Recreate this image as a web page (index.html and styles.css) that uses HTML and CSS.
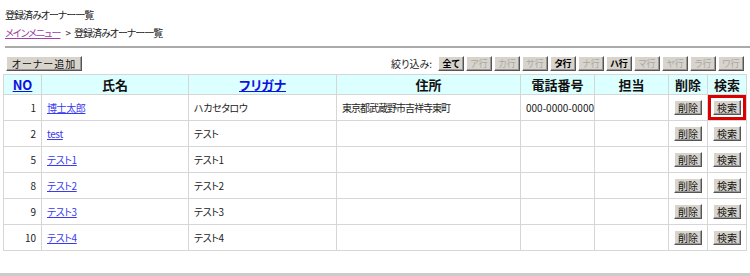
FILE: index.html
```html
<!DOCTYPE html>
<html lang="ja">
<head>
<meta charset="utf-8">
<title>登録済みオーナー一覧</title>
<link rel="stylesheet" href="styles.css">
</head>
<body>
<div class="page">
  <div class="title">登録済みオーナー一覧</div>
  <div class="crumb"><a href="#" class="crumb-link">メインメニュー</a><span class="sep">&gt;</span>登録済みオーナー一覧</div>
  <div class="rule"></div>
  <div class="toolbar">
    <button class="btn btn-add">オーナー追加</button>
    <div class="filter">
      <span class="filter-label">絞り込み:</span>
      <button class="btn fbtn on">全て</button>
      <button class="btn fbtn off">ア行</button>
      <button class="btn fbtn off">カ行</button>
      <button class="btn fbtn off">サ行</button>
      <button class="btn fbtn on">タ行</button>
      <button class="btn fbtn off">ナ行</button>
      <button class="btn fbtn on">ハ行</button>
      <button class="btn fbtn off">マ行</button>
      <button class="btn fbtn off">ヤ行</button>
      <button class="btn fbtn off">ラ行</button>
      <button class="btn fbtn off">ワ行</button>
    </div>
  </div>
  <table class="list">
    <colgroup>
      <col class="c-no"><col class="c-name"><col class="c-kana"><col class="c-addr"><col class="c-tel"><col class="c-staff"><col class="c-del"><col class="c-search">
    </colgroup>
    <thead>
      <tr>
        <th><a href="#" class="hlink">NO</a></th>
        <th>氏名</th>
        <th><a href="#" class="hlink">フリガナ</a></th>
        <th>住所</th>
        <th>電話番号</th>
        <th>担当</th>
        <th>削除</th>
        <th>検索</th>
      </tr>
    </thead>
    <tbody>
      <tr>
        <td class="num">1</td>
        <td><a href="#" class="link">博士太郎</a></td>
        <td>ハカセタロウ</td>
        <td class="addr">東京都武蔵野市吉祥寺東町</td>
        <td class="tel">000-0000-0000</td>
        <td></td>
        <td class="ctr"><button class="btn rbtn">削除</button></td>
        <td class="ctr"><button class="btn rbtn hl">検索</button></td>
      </tr>
      <tr>
        <td class="num">2</td>
        <td><a href="#" class="link">test</a></td>
        <td>テスト</td>
        <td></td><td></td><td></td>
        <td class="ctr"><button class="btn rbtn">削除</button></td>
        <td class="ctr"><button class="btn rbtn">検索</button></td>
      </tr>
      <tr>
        <td class="num">5</td>
        <td><a href="#" class="link">テスト1</a></td>
        <td>テスト1</td>
        <td></td><td></td><td></td>
        <td class="ctr"><button class="btn rbtn">削除</button></td>
        <td class="ctr"><button class="btn rbtn">検索</button></td>
      </tr>
      <tr>
        <td class="num">8</td>
        <td><a href="#" class="link">テスト2</a></td>
        <td>テスト2</td>
        <td></td><td></td><td></td>
        <td class="ctr"><button class="btn rbtn">削除</button></td>
        <td class="ctr"><button class="btn rbtn">検索</button></td>
      </tr>
      <tr>
        <td class="num">9</td>
        <td><a href="#" class="link">テスト3</a></td>
        <td>テスト3</td>
        <td></td><td></td><td></td>
        <td class="ctr"><button class="btn rbtn">削除</button></td>
        <td class="ctr"><button class="btn rbtn">検索</button></td>
      </tr>
      <tr>
        <td class="num">10</td>
        <td><a href="#" class="link">テスト4</a></td>
        <td>テスト4</td>
        <td></td><td></td><td></td>
        <td class="ctr"><button class="btn rbtn">削除</button></td>
        <td class="ctr"><button class="btn rbtn">検索</button></td>
      </tr>
    </tbody>
  </table>
  <div class="footer-bar"></div>
</div>
</body>
</html>
```
FILE: styles.css
```css
* { box-sizing: border-box; }
html, body { margin: 0; padding: 0; background: #fff; }
body {
  font-family: "Noto Sans CJK JP", "DejaVu Sans", sans-serif;
  font-feature-settings: "palt";
  font-size: 11px;
  color: #222;
  width: 750px;
  height: 276px;
  overflow: hidden;
}
.page { display: flex; flex-direction: column; }
.title {
  margin: 8px 0 0 5px;
  height: 14px;
  line-height: 14px;
  font-size: 10px;
  letter-spacing: -1px;
}
.crumb {
  margin: 4px 0 0 5px;
  height: 14px;
  line-height: 14px;
  font-size: 10px;
  letter-spacing: -1px;
}
.crumb .sep { margin: 0 4px 0 5px; }
.crumb-link { color: #a040a8; text-decoration: underline; }
.rule {
  margin: 6px 0 0 5px;
  height: 2px;
  background: #aaaaaa;
}
.toolbar {
  margin: 8px 0 0 6px;
  height: 15px;
  display: flex;
  justify-content: space-between;
  align-items: center;
  padding-right: 6px;
}
.btn {
  font-family: "Noto Sans CJK JP", "DejaVu Sans", sans-serif;
  font-feature-settings: "palt";
  font-size: 10px;
  line-height: 11px;
  height: 15px;
  padding: 0 4px;
  background: #d8d4cc;
  color: #111;
  border: 1px solid;
  border-color: #ffffff #555555 #555555 #ffffff;
  box-shadow: inset -1px -1px 0 #999;
  border-radius: 0;
  margin: 0;
  cursor: pointer;
}
.btn-add { width: 76px; padding: 0; letter-spacing: 1px; }
.filter { display: flex; align-items: center; gap: 2px; }
.filter-label { font-size: 10px; margin-right: 4px; }
.fbtn { width: 26px; padding: 0; font-size: 9px; }
.fbtn.on { font-weight: bold; color: #000; }
.fbtn.off { color: #a8a8a8; }
.list {
  margin: 3px 0 0 3px;
  width: 743px;
  border-collapse: collapse;
  table-layout: fixed;
}
.c-no { width: 38px; }
.c-name { width: 147px; }
.c-kana { width: 148px; }
.c-addr { width: 184px; }
.c-tel { width: 74px; }
.c-staff { width: 74px; }
.c-del { width: 39px; }
.c-search { width: 39px; }
.list th, .list td {
  border: 1px solid #d6d6d6;
  padding: 0 5px;
  white-space: nowrap;
  overflow: visible;
}
.list thead tr { height: 20px; }
.list th {
  background: #dcffff;
  font-size: 13px;
  font-weight: bold;
  color: #111;
  text-align: center;
  padding: 0;
}
.list tbody tr { height: 26px; }
.list td { font-size: 10px; letter-spacing: -0.4px; }
.list td.addr { letter-spacing: -1px; }
.list td.tel, .list td.num { letter-spacing: 0; }
.hlink { color: #1010e0; text-decoration: underline; }
.link { color: #3a3af0; text-decoration: underline; }
.num { text-align: right; }
.list td.ctr { text-align: center; padding: 0; letter-spacing: 0; }
.rbtn { width: 28px; padding: 0; }
.hl { outline: 3px solid #d80000; outline-offset: 2px; }
.footer-bar {
  margin-top: 22px;
  height: 4px;
  background: #cccccc;
}
```
